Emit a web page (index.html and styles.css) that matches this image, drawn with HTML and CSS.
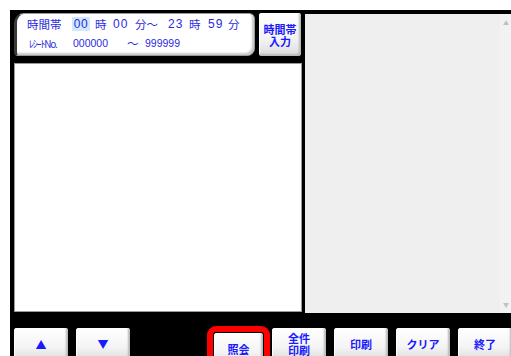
FILE: index.html
```html
<!DOCTYPE html>
<html lang="ja">
  <head>
    <meta charset="UTF-8" />
    <meta name="viewport" content="width=device-width, initial-scale=1.0" />
    <title>時間帯照会</title>
    <link rel="stylesheet" href="styles.css">
  </head>
  <body>
    <div class="screen">
      <div class="main">
        <div class="left-col">
          <div class="head-row">
            <div class="cond-box">
              <div class="cond-line">
                <span class="lbl">時間帯</span>
                <span class="num sel">00</span>
                <span class="unit w18">時</span>
                <span class="num w22">00</span>
                <span class="unit w33">分～</span>
                <span class="num w21">23</span>
                <span class="unit w19">時</span>
                <span class="num w20">59</span>
                <span class="unit">分</span>
              </div>
              <div class="cond-line">
                <span class="lbl small">ﾚｼｰﾄNo.</span>
                <span class="code w54">000000</span>
                <span class="unit w18">～</span>
                <span class="code">999999</span>
              </div>
            </div>
            <button class="btn btn-tall">時間帯<br>入力</button>
          </div>
          <div class="list-box"></div>
        </div>
        <div class="detail-box">
          <span class="scroll-up">▲</span>
          <span class="scroll-down">▼</span>
        </div>
      </div>

      <div class="toolbar">
        <button class="btn btn-arrow">▲</button>
        <button class="btn btn-arrow">▼</button>
        <div class="spacer"></div>
        <div class="focus-ring">
          <button class="btn">照会</button>
        </div>
        <button class="btn">全件<br>印刷</button>
        <button class="btn">印刷</button>
        <button class="btn">クリア</button>
        <button class="btn">終了</button>
      </div>
    </div>
  </body>
</html>
```

FILE: styles.css
```css
body {
  margin: 0;
  padding: 10px 0 0 10px;
  background-color: #ffffff;
  font-family: "Noto Sans CJK JP", "Liberation Sans", sans-serif;
  overflow: hidden;
}

.screen {
  background-color: #000000;
  height: 346px;
  padding: 3px 0 0 4px;
  box-sizing: border-box;
}

.main {
  display: flex;
  gap: 3px;
}

.left-col {
  width: 288px;
  display: flex;
  flex-direction: column;
  gap: 7px;
}

.head-row {
  display: flex;
  gap: 4px;
  height: 43px;
}

/* condition box (time range / receipt no.) */
.cond-box {
  width: 241px;
  box-sizing: border-box;
  background: #ffffff;
  border: 1px solid #9a9a9a;
  border-left: 3px solid #3a3a3a;
  border-radius: 10px 6px 8px 4px;
  box-shadow: inset -2px -2px 2px #c8c8c8;
  padding: 2px 0 0 10px;
  color: #2a2ae0;
  font-size: 11px;
  display: flex;
  flex-direction: column;
  gap: 3px;
}

.cond-line {
  display: flex;
  align-items: center;
  height: 16px;
  white-space: nowrap;
}

.cond-line span {
  flex: none;
}

.lbl {
  width: 45px;
  font-size: 11.5px;
}

.lbl.small {
  font-size: 10px;
  letter-spacing: -1.2px;
  width: 44px;
  margin-left: 2px;
}

.num {
  font-family: "Liberation Sans", sans-serif;
  font-size: 12px;
  letter-spacing: 1px;
}

.num.sel {
  width: 18px;
  margin-right: 5px;
  text-align: center;
  letter-spacing: 0.5px;
  background-color: #cfe8ff;
}

.code {
  font-family: "Liberation Sans", sans-serif;
  font-size: 10.5px;
}

.w18 { width: 18px; }
.w19 { width: 19px; }
.w20 { width: 20px; }
.w21 { width: 21px; }
.w22 { width: 22px; }
.w33 { width: 33px; }
.w54 { width: 54px; }

.unit {
  font-size: 11.5px;
}

/* buttons */
.btn {
  width: 54px;
  height: 32px;
  border: none;
  border-radius: 3px;
  background: linear-gradient(#ffffff, #f4f4f4 60%, #dcdcdc);
  box-shadow: inset -2px -2px 2px #b8b8b8, inset 1px 1px 0 #ffffff;
  color: #1a1aff;
  font-family: "Noto Sans CJK JP", sans-serif;
  font-weight: bold;
  font-size: 11px;
  line-height: 12px;
  padding: 0;
  flex: none;
}

.btn-tall {
  width: 42px;
  height: 43px;
}

.list-box {
  height: 249px;
  background: #ffffff;
  border: 1px solid #9a9a9a;
  box-sizing: border-box;
}

.detail-box {
  flex: 1;
  height: 299px;
  margin-top: 1px;
  background: #efefef;
  border-right: 11px solid #f2f2f2;
  position: relative;
}

.scroll-up,
.scroll-down {
  position: absolute;
  right: -9px;
  font-size: 6px;
  color: #c0c0c0;
}

.scroll-up {
  top: 4px;
}

.scroll-down {
  bottom: 4px;
}

.toolbar {
  display: flex;
  gap: 8px;
  margin-top: 15px;
  align-items: flex-start;
}

.btn-arrow {
  font-size: 11px;
}

.spacer {
  width: 61px;
  flex: none;
}

.focus-ring {
  margin: -2px -6px 0 0;
  padding: 1px 1px 0 1px;
  border: 6px solid #ff0000;
  border-bottom: none;
  border-radius: 9px 9px 0 0;
  height: 40px;
  flex: none;
}

.focus-ring .btn {
  width: 49px;
}
```
